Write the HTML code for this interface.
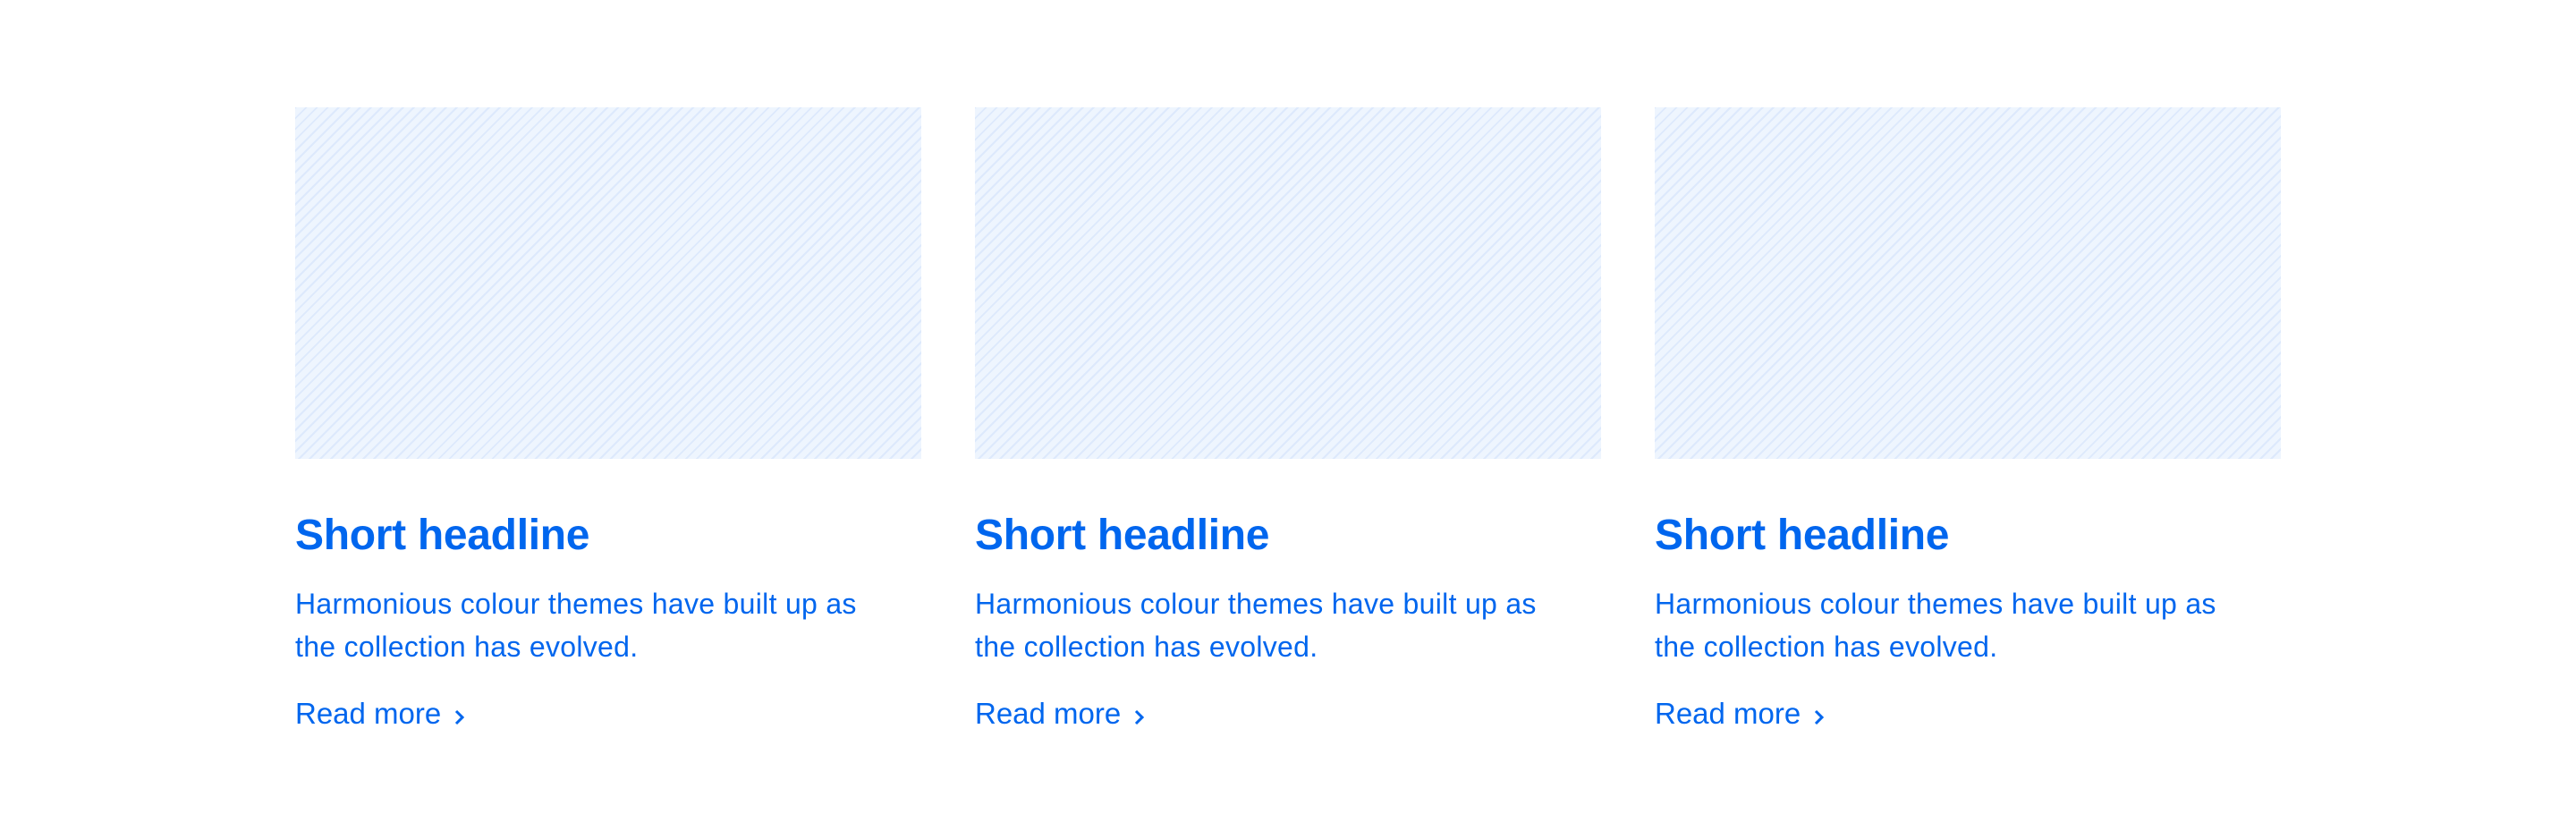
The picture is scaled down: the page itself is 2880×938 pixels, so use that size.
<!DOCTYPE html>
<html><head><meta charset="utf-8"><style>
html,body{margin:0;padding:0;background:#fff;width:2880px;height:938px;overflow:hidden}
body{position:relative;font-family:"Liberation Sans",Helvetica,Arial,sans-serif;color:#0066ee}
.img{position:absolute;top:120px;width:700px;height:393px;background-color:#eef5fe;
background-image:repeating-linear-gradient(-45deg,#eef5fe 0,#eef5fe 6.5px,#dde9fc 6.5px,#dde9fc 8.5px)}
.h{position:absolute;top:575px;font-size:48px;line-height:48px;font-weight:bold;white-space:nowrap;letter-spacing:-0.3px}
.p{position:absolute;top:651px;font-size:32px;line-height:48px;white-space:nowrap;letter-spacing:0.3px}
.r{position:absolute;top:781px;font-size:33px;line-height:33px;white-space:nowrap}
.r svg{position:absolute;left:178px;top:12px}
</style></head><body>
<div class="img" style="left:330px"></div>
<div class="img" style="left:1090px"></div>
<div class="img" style="left:1850px"></div>

<div class="h" style="left:330px">Short headline</div>
<div class="h" style="left:1090px">Short headline</div>
<div class="h" style="left:1850px">Short headline</div>

<div class="p" style="left:330px">Harmonious colour themes have built up as<br>the collection has evolved.</div>
<div class="p" style="left:1090px">Harmonious colour themes have built up as<br>the collection has evolved.</div>
<div class="p" style="left:1850px">Harmonious colour themes have built up as<br>the collection has evolved.</div>

<div class="r" style="left:330px">Read more<svg width="12" height="18" viewBox="0 0 12 18"><path d="M2 2 L9 9 L2 16" fill="none" stroke="#0066ee" stroke-width="3"/></svg></div>
<div class="r" style="left:1090px">Read more<svg width="12" height="18" viewBox="0 0 12 18"><path d="M2 2 L9 9 L2 16" fill="none" stroke="#0066ee" stroke-width="3"/></svg></div>
<div class="r" style="left:1850px">Read more<svg width="12" height="18" viewBox="0 0 12 18"><path d="M2 2 L9 9 L2 16" fill="none" stroke="#0066ee" stroke-width="3"/></svg></div>
</body></html>
